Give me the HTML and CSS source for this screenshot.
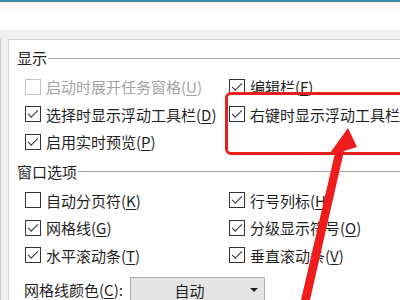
FILE: index.html
```html
<!DOCTYPE html>
<html lang="zh-CN">
<head>
    <meta charset="utf-8">
    <title>高级选项</title>
    <link rel="stylesheet" href="styles.css">
</head>
<body>

<div class="titlebar"></div>

<div class="frame">
    <div class="sidebar"></div>

    <div class="panel">
        <div class="legend"><span>显示</span><i></i></div>

        <div class="grid">
            <label class="opt off"><span class="box"></span>启动时展开任务窗格(<u>U</u>)</label>
            <label class="opt"><span class="box on"></span>编辑栏(<u>F</u>)</label>
            <label class="opt"><span class="box on"></span>选择时显示浮动工具栏(<u>D</u>)</label>
            <label class="opt"><span class="box on"></span>右键时显示浮动工具栏</label>
            <label class="opt"><span class="box on"></span>启用实时预览(<u>P</u>)</label>
        </div>

        <div class="legend second"><span>窗口选项</span><i></i></div>

        <div class="grid">
            <label class="opt"><span class="box"></span>自动分页符(<u>K</u>)</label>
            <label class="opt"><span class="box on"></span>行号列标(<u>H</u>)</label>
            <label class="opt"><span class="box on"></span>网格线(<u>G</u>)</label>
            <label class="opt"><span class="box on"></span>分级显示符号(<u>O</u>)</label>
            <label class="opt"><span class="box on"></span>水平滚动条(<u>T</u>)</label>
            <label class="opt"><span class="box on"></span>垂直滚动条(<u>V</u>)</label>
        </div>

        <div class="color-row">
            <span class="color-label">网格线颜色(<u>C</u>):</span>
            <div class="select"><span>自动</span><b></b></div>
        </div>
    </div>
</div>

<!-- annotation drawn on top of the screenshot -->
<div class="highlight"></div>
<svg class="arrow" width="400" height="300" viewBox="0 0 400 300">
    <polygon points="348,128 357,147 344,151 310,300 301,300 335,153 330,153" fill="#ee1c1c"/>
</svg>

</body>
</html>
```

FILE: styles.css
```css
:root {
    --text: #1f1f1f;
    --line: #a9a9a9;
    --red: #e8201c;
}

body {
    margin: 0;
    width: 400px;
    height: 300px;
    overflow: hidden;
    position: relative;

    font-family: "Noto Sans CJK SC", "Liberation Sans", sans-serif;
    font-size: 15px;
    color: var(--text);
    background: #f0f0f0;
}

u {
    text-decoration: underline;
    text-underline-offset: 2px;
}

.titlebar {
    height: 28px;
    border-top: 2px solid #3d8aa6;
    background: linear-gradient(#fbf7ef, #ffffff 40%);
}

.frame {
    display: flex;
    height: 270px;
    padding-top: 9px;
    box-sizing: border-box;
}

.sidebar {
    width: 3px;
    background: #d9ead9;
    border-right: 1px solid #c9cfc9;
    margin-right: 7px;
}

.panel {
    flex: 1;
    background: #fff;
    border-left: 1px solid #d4d4d4;
    border-top: 1px solid #d4d4d4;
    padding: 8px 0 0 8px;
}

.legend {
    display: flex;
    align-items: center;
    height: 20px;
    line-height: 20px;
}

.legend i {
    flex: 1;
    height: 1px;
    background: var(--line);
    margin-left: 1px;
}

.legend.second {
    margin-top: 6px;
}

.grid {
    display: grid;
    grid-template-columns: 204px 1fr;
    margin: 5px 0 0 8px;
}

.opt {
    display: flex;
    align-items: center;
    height: 27.5px;
    white-space: nowrap;
}

.opt.off {
    color: #a3a3a3;
}

.box {
    width: 14px;
    height: 14px;
    border: 1px solid #333;
    margin-right: 5px;
    flex: none;
    position: relative;
}

.off .box {
    border-color: #c4c4c4;
}

.box.on::after {
    content: "";
    position: absolute;
    left: 2px;
    top: 2px;
    width: 9px;
    height: 4px;
    border-left: 1.2px solid #333;
    border-bottom: 1.2px solid #333;
    transform: translate(0, 1px) rotate(-45deg);
    transform-origin: center;
}

.color-row {
    display: flex;
    align-items: center;
    margin: 7px 0 0 7px;
    height: 26px;
}

.color-label {
    width: 106px;
}

.select {
    width: 133px;
    height: 24px;
    margin-top: 2px;
    background: #e5e5e5;
    border: 1px solid #adadad;
    display: flex;
    align-items: center;
    position: relative;
}

.select span {
    flex: 1;
    text-align: center;
    padding-right: 2px;
}

.select b {
    width: 0;
    height: 0;
    border-left: 4px solid transparent;
    border-right: 4px solid transparent;
    border-top: 4px solid #222;
    margin-right: 6px;
}

.highlight {
    position: absolute;
    left: 225px;
    top: 92px;
    width: 200px;
    height: 57px;
    border: 3.5px solid var(--red);
    border-radius: 6px;
}

.arrow {
    position: absolute;
    left: 0;
    top: 0;
}
```
